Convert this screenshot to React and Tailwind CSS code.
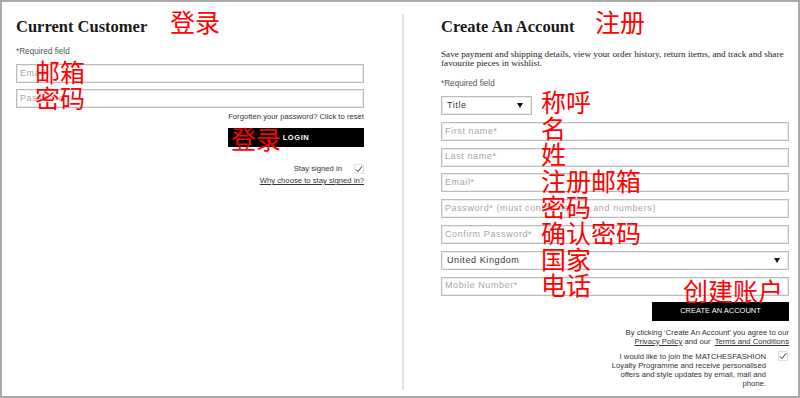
// App.jsx — login / register page with red annotations

const red = "absolute text-[25px] leading-[25px] text-[#ff0000] whitespace-nowrap";
const cjk = { fontFamily: '"Noto Sans CJK SC", "Noto Sans", sans-serif' };

function Field({ placeholder }) {
  return (
    <div className="h-[19px] w-full border border-[#bcbcbc] shadow-[inset_0_0_0_1px_#ececec] pl-[3px] flex items-center text-[9px] tracking-[0.6px] text-[#a6a6a6]">
      {placeholder}
    </div>
  );
}

function Select({ value, className }) {
  return (
    <div className={`h-[19px] border border-[#bcbcbc] shadow-[inset_0_0_0_1px_#ececec] pl-[5px] pr-[8px] flex items-center justify-between text-[9px] tracking-[0.6px] text-[#333] ${className}`}>
      <span>{value}</span>
      <svg width="6" height="5" viewBox="0 0 6 5">
        <path d="M0 0H6L3 5Z" fill="#111" />
      </svg>
    </div>
  );
}

function Check() {
  return (
    <div className="w-[10px] h-[10px] border border-[#e2e2e2] flex items-center justify-center">
      <svg width="9" height="8" viewBox="0 0 9 8">
        <path d="M1 4.5L3.3 7L8 0.8" stroke="#222" strokeWidth="1" fill="none" />
      </svg>
    </div>
  );
}

export default function App() {
  return (
    <div
      className="relative w-[800px] h-[398px] border-2 border-[#a9a9a9] bg-white flex text-[#444] overflow-hidden"
      style={{ fontFamily: '"Liberation Sans", Arial, sans-serif' }}
    >
      {/* Current Customer */}
      <div className="w-[400px] pl-[14px] pr-[38px] pt-[14px]">
        <h2 className="h-[22px] leading-[22px] text-[16.5px] font-bold text-[#1a1a1a]" style={{ fontFamily: '"Liberation Serif", serif' }}>
          Current Customer
        </h2>
        <div className="mt-[8px] h-[12px] leading-[12px] text-[8.2px] text-[#555]">*Required field</div>
        <div className="mt-[6px] flex flex-col gap-[6px]">
          <Field placeholder="Email" />
          <Field placeholder="Password" />
        </div>
        <div className="mt-[3px] h-[12px] leading-[12px] text-[7.7px] text-[#333] text-right">
          Forgotten your password? Click to reset
        </div>
        <div className="mt-[5px] flex justify-end">
          <button className="w-[136px] h-[19px] bg-black text-white text-[7.5px] font-bold tracking-[0.6px]">LOGIN</button>
        </div>
        <div className="mt-[15px] h-[13px] flex items-center justify-end gap-[12px] text-[7.7px] text-[#333]">
          <span>Stay signed in</span>
          <Check />
        </div>
        <div className="h-[12px] leading-[12px] text-right text-[7.7px] text-[#333] underline">
          Why choose to stay signed in?
        </div>
      </div>

      {/* divider */}
      <div className="w-[2px] bg-[#e4e4e4] mt-[12px] mb-[6px]" />

      {/* Create An Account */}
      <div className="w-[348px] ml-[37px] pt-[14px]">
        <h2 className="h-[22px] leading-[22px] text-[16.5px] font-bold text-[#1a1a1a]" style={{ fontFamily: '"Liberation Serif", serif' }}>
          Create An Account
        </h2>
        <p className="mt-[12px] text-[9.2px] leading-[9px] text-[#222]" style={{ fontFamily: '"Liberation Serif", serif' }}>
          Save payment and shipping details, view your order history, return items, and track and share favourite pieces in wishlist.
        </p>
        <div className="mt-[10px] h-[12px] leading-[12px] text-[8.2px] text-[#555]">*Required field</div>
        <div className="mt-[6px] flex flex-col gap-[6.8px]">
          <Select value="Title" className="w-[91px]" />
          <Field placeholder="First name*" />
          <Field placeholder="Last name*" />
          <Field placeholder="Email*" />
          <Field placeholder="Password* (must contain letters and numbers)" />
          <Field placeholder="Confirm Password*" />
          <Select value="United Kingdom" className="w-full" />
          <Field placeholder="Mobile Number*" />
        </div>
        <div className="mt-[6px] flex justify-end">
          <button className="w-[137px] h-[19px] bg-black text-white text-[7.5px] font-medium">CREATE AN ACCOUNT</button>
        </div>
        <div className="mt-[7px] text-right text-[7.7px] leading-[9px] text-[#333]">
          <div>By clicking ‘Create An Account’ you agree to our</div>
          <div>
            <span className="underline">Privacy Policy</span> and our&nbsp; <span className="underline">Terms and Conditions</span>
          </div>
        </div>
        <div className="mt-[6px] flex justify-end items-start gap-[12px] text-[7.7px] leading-[9.3px] text-[#333]">
          <div className="w-[162px] text-right">
            I would like to join the MATCHESFASHION Loyalty Programme and receive personalised offers and style updates by email, mail and phone.
          </div>
          <div className="mt-[-1px] mr-[1px]">
            <Check />
          </div>
        </div>
      </div>

      {/* red annotations */}
      <div style={cjk}>
        <span className={`${red} left-[168px] top-[7px]`}>登录</span>
        <span className={`${red} left-[33px] top-[57px]`}>邮箱</span>
        <span className={`${red} left-[33px] top-[83px]`}>密码</span>
        <span className={`${red} left-[229px] top-[124px]`}>登录</span>
        <span className={`${red} left-[593px] top-[7px]`}>注册</span>
        <span className={`${red} left-[539px] top-[87px]`}>称呼</span>
        <span className={`${red} left-[539px] top-[113px]`}>名</span>
        <span className={`${red} left-[539px] top-[139px]`}>姓</span>
        <span className={`${red} left-[539px] top-[166px]`}>注册邮箱</span>
        <span className={`${red} left-[539px] top-[192px]`}>密码</span>
        <span className={`${red} left-[539px] top-[218px]`}>确认密码</span>
        <span className={`${red} left-[539px] top-[244px]`}>国家</span>
        <span className={`${red} left-[539px] top-[270px]`}>电话</span>
        <span className={`${red} left-[681px] top-[276px]`}>创建账户</span>
      </div>
    </div>
  );
}
